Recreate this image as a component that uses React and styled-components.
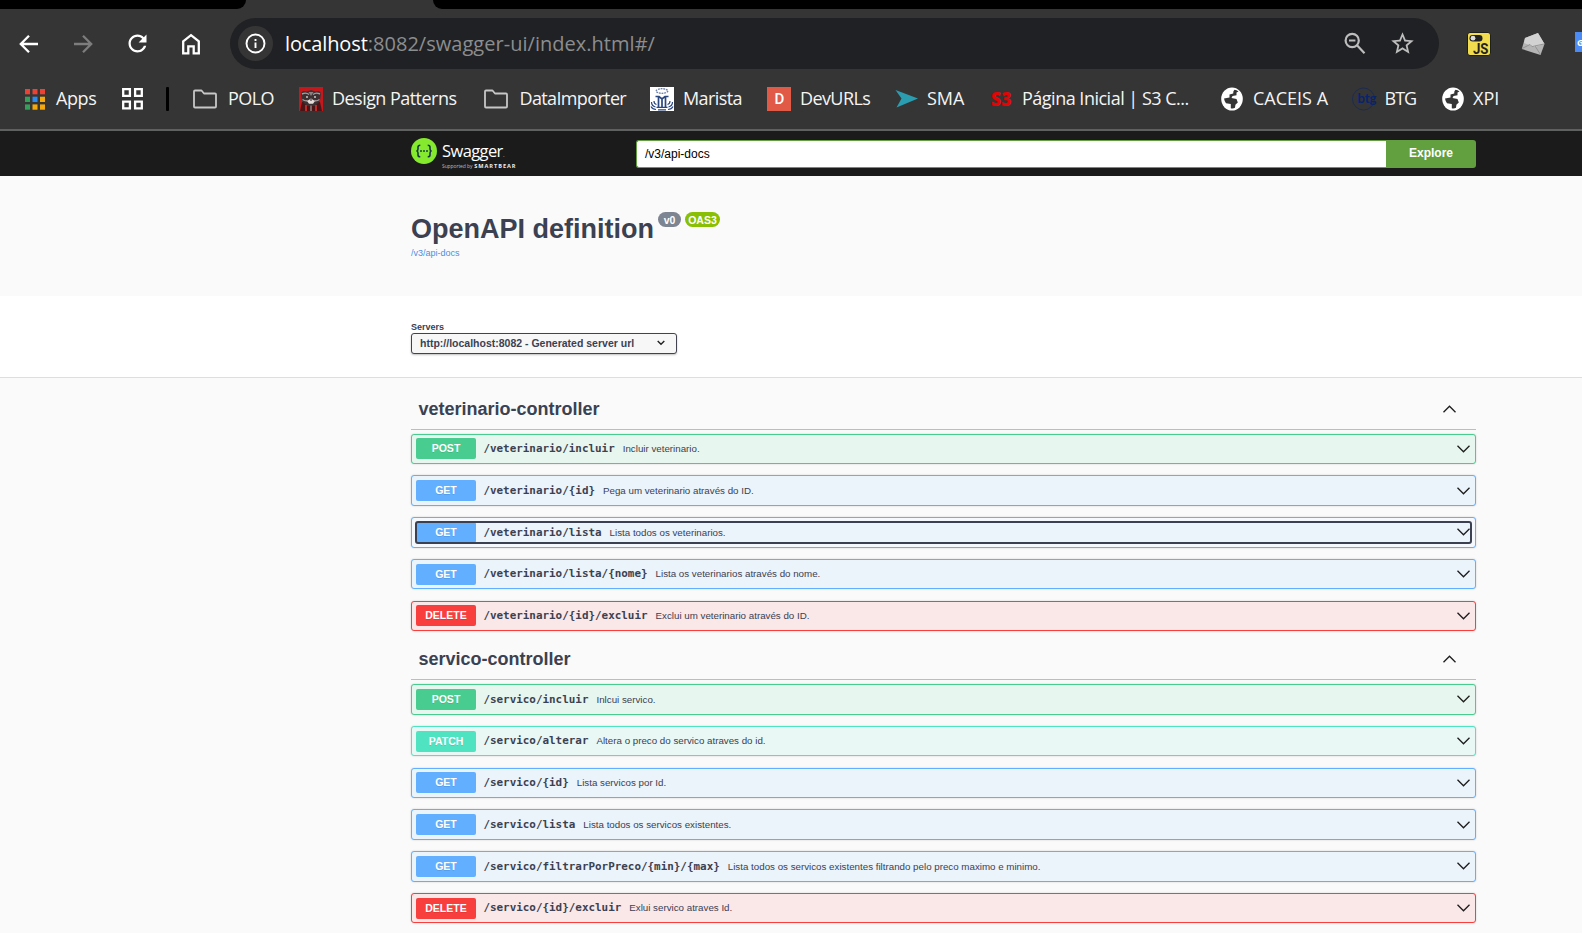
import React from 'react';
import styled, { createGlobalStyle, css } from 'styled-components';

const GlobalStyle = createGlobalStyle`
  * { box-sizing: border-box; }
  html, body { margin: 0; padding: 0; }
  body {
    width: 1582px;
    height: 933px;
    overflow: hidden;
    background: #fafafa;
    color: #3b4151;
    font-family: 'Liberation Sans', Arial, sans-serif;
  }
  svg { display: block; flex: none; }
`;

const uiFont = "'Open Sans', 'Noto Sans', sans-serif";

/* ---------- browser frame ---------- */

const Browser = styled.header`
  background: #353535;
  height: 131px;
  border-bottom: 2px solid #5f6060;
`;

const TabStrip = styled.div`
  display: flex;
  justify-content: space-between;
  height: 9px;
  background: #353535;
`;

const TabGap = styled.div`
  background: #000;
  width: ${(p) => p.$width}px;
  border-radius: ${(p) => (p.$side === 'left' ? '0 0 12px 0' : '0 0 0 12px')};
`;

const Toolbar = styled.div`
  display: flex;
  align-items: center;
  height: 69px;
  padding-left: 17px;
`;

const NavButton = styled.span`
  display: flex;
  align-items: center;
  justify-content: center;
  width: 24px;
  height: 24px;
  margin-right: ${(p) => p.$gap}px;
  color: ${(p) => (p.$dim ? '#7d7d7d' : '#fff')};
`;

const AddressBar = styled.div`
  display: flex;
  align-items: center;
  width: 1209px;
  height: 51px;
  padding: 0 23px 0 8px;
  border-radius: 26px;
  background: #202124;
`;

const InfoBadge = styled.span`
  display: flex;
  align-items: center;
  justify-content: center;
  width: 35px;
  height: 35px;
  margin-right: 12px;
  border-radius: 50%;
  background: #353535;
`;

const Url = styled.span`
  flex: 1;
  font: 20px/28px ${uiFont};
  letter-spacing: 0.03px;
  color: #8c8d8f;
  white-space: nowrap;
`;

const Host = styled.span`
  color: #fff;
  letter-spacing: -0.12px;
`;

const AddressIcons = styled.span`
  display: flex;
  align-items: center;
  gap: 22px;
  color: #bdbdbd;
`;

const Extensions = styled.div`
  display: flex;
  align-items: center;
  gap: 30px;
  margin-left: 28px;
  overflow: hidden;
  flex: 1;
`;

const Bookmarks = styled.nav`
  display: flex;
  align-items: center;
  height: 42px;
  padding: 0 0 0 25px;
`;

const Bookmark = styled.span`
  display: flex;
  align-items: center;
  flex: none;
  gap: ${(p) => p.$gap}px;
  width: ${(p) => p.$width}px;
`;

const BookmarkLabel = styled.span`
  padding-bottom: 2px;
  font: 18px/24px ${uiFont};
  letter-spacing: ${(p) => p.$track || 0}px;
  color: #f4f4f4;
  white-space: nowrap;
`;

const Divider = styled.span`
  width: 3px;
  height: 24px;
  margin-right: 24px;
  border-radius: 1px;
  background: #000;
`;

/* ---------- swagger page ---------- */

const Wrapper = styled.div`
  display: flex;
  flex-direction: column;
  width: 1065px;
  margin-left: 411px;
`;

const TopBar = styled.div`
  height: 45px;
  background: #1b1b1b;
`;

const TopBarRow = styled(Wrapper)`
  flex-direction: row;
  align-items: center;
  height: 45px;
`;

const Logo = styled.div`
  display: flex;
  align-items: flex-start;
  gap: 5px;
  width: 225px;
  height: 31px;
`;

const LogoText = styled.div`
  display: flex;
  flex-direction: column;
  color: #fff;
  font-family: 'Open Sans', sans-serif;
  white-space: nowrap;
`;

const LogoName = styled.span`
  height: 22px;
  font-size: 16.5px;
  line-height: 26px;
  letter-spacing: -0.6px;
`;

const LogoDot = styled.span`
  font-size: 8px;
  color: #888;
`;

const LogoTagline = styled.span`
  display: flex;
  gap: 2px;
  height: 8px;
  font-size: 5px;
  line-height: 12px;
  letter-spacing: -0.1px;
  color: #bbb;
`;

const LogoBrand = styled.b`
  font-size: 5.6px;
  letter-spacing: 0.95px;
  color: #eee;
`;

const ApiInput = styled.div`
  flex: 1;
  height: 28px;
  padding: 0 8px;
  border: 1px solid #62a03f;
  border-right: 0;
  border-radius: 3px 0 0 3px;
  background: #fff;
  color: #000;
  font-size: 12px;
  line-height: 26px;
`;

const ExploreButton = styled.div`
  width: 90px;
  height: 28px;
  border-radius: 0 3px 3px 0;
  background: #62a03f;
  color: #fff;
  font-size: 12px;
  font-weight: 700;
  line-height: 27px;
  text-align: center;
`;

const Info = styled.section`
  height: 120px;
  padding-top: 35px;
`;

const TitleRow = styled.div`
  display: flex;
  gap: 4px;
  height: 36px;
`;

const Title = styled.h1`
  margin: 0;
  width: 243px;
  font-size: 27px;
  line-height: 37px;
  white-space: nowrap;
`;

const Version = styled.span`
  height: 15px;
  width: ${(p) => p.$width}px;
  margin-top: 1px;
  border-radius: 8px;
  background: ${(p) => p.$color};
  color: #fff;
  font-size: 10.5px;
  font-weight: 700;
  line-height: 16px;
  text-align: center;
`;

const SpecLink = styled.a`
  color: #4990e2;
  font-size: 9px;
  line-height: 12px;
`;

const Servers = styled.section`
  height: 82px;
  padding-top: 25px;
  background: #fff;
  border-bottom: 1px solid #dedede;
`;

const ServersLabel = styled.span`
  font-size: 9px;
  font-weight: 700;
  line-height: 12px;
`;

const ServerSelect = styled.div`
  display: flex;
  align-items: center;
  justify-content: space-between;
  width: 266px;
  height: 21px;
  padding: 0 11px 1px 8px;
  border: 1px solid #41444e;
  border-radius: 3px;
  background: #f7f7f7;
  box-shadow: 0 1px 2px rgba(0, 0, 0, 0.25);
  font-size: 10.5px;
  font-weight: 700;
  line-height: 18px;
  white-space: nowrap;
`;

const Tag = styled.h2`
  display: flex;
  align-items: center;
  justify-content: space-between;
  height: ${(p) => p.$height}px;
  margin: 0 0 ${(p) => p.$gap}px;
  padding: ${(p) => p.$height - 41}px 20px 0 7.5px;
  border-bottom: 1px solid #bcbdc0;
  font-size: 18px;
  line-height: 24px;
`;

const Operations = styled.div`
  display: flex;
  flex-direction: column;
  gap: 11.25px;
`;

const tones = {
  POST: ['#49cc90', '#e8f6f0'],
  GET: ['#61affe', '#ebf3fb'],
  PATCH: ['#50e3c2', '#e9f8f5'],
  DELETE: ['#f93e3e', '#fae7e7'],
};

const Operation = styled.div`
  height: 30.5px;
  padding: 3px;
  border: 1px solid ${(p) => tones[p.$method][0]};
  border-radius: 3px;
  background: ${(p) => tones[p.$method][1]};
  box-shadow: 0 0 2px rgba(0, 0, 0, 0.19);
  ${(p) => p.$focused && css`background: #f5f9fd;`}
`;

const Summary = styled.div`
  display: flex;
  align-items: center;
  height: 22.5px;
  padding-right: 2px;
  ${(p) =>
    p.$focused &&
    css`
      background: ${tones.GET[1]};
      outline: 2px solid #3b4151;
      outline-offset: -2px;
      border-radius: 3px;
    `}
`;

const Method = styled.span`
  width: 60px;
  height: 21px;
  margin-left: 1px;
  border-radius: 2px;
  background: ${(p) => tones[p.$method][0]};
  color: #fff;
  font-size: 10.5px;
  font-weight: 700;
  line-height: 21px;
  text-align: center;
  text-shadow: 0 1px 0 rgba(0, 0, 0, 0.1);
`;

const Path = styled.span`
  margin: 0 8px 0 7.4px;
  padding-top: 0.6px;
  font: 700 10.92px/20px 'DejaVu Sans Mono', monospace;
  white-space: nowrap;
`;

const Description = styled.span`
  flex: 1;
  padding-top: 0.6px;
  font-size: 9.75px;
  line-height: 20px;
  white-space: nowrap;
`;

/* ---------- icons ---------- */

const Stroke = ({ size = 24, w = 2, children }) => (
  <svg width={size} height={size} viewBox="0 0 24 24" fill="none" stroke="currentColor" strokeWidth={w}>
    {children}
  </svg>
);

const BackIcon = () => <Stroke w={2.3}><path d="M21 12H4.5M12 3.8L3.8 12l8.2 8.2" /></Stroke>;
const ForwardIcon = () => <Stroke w={2.3}><path d="M3 12h16.5M12 3.8l8.2 8.2-8.2 8.2" /></Stroke>;
const ReloadIcon = () => (
  <svg width="27" height="27" viewBox="0 0 24 24" fill="currentColor">
    <path d="M17.65 6.35C16.2 4.9 14.21 4 12 4c-4.42 0-7.99 3.58-7.99 8s3.57 8 7.99 8c3.73 0 6.84-2.55 7.73-6h-2.08c-.82 2.33-3.04 4-5.65 4-3.31 0-6-2.69-6-6s2.69-6 6-6c1.66 0 3.14.69 4.22 1.78L13 11h7V4l-2.35 2.35z" />
  </svg>
);
const HomeIcon = () => (
  <Stroke w={2.3}><path d="M4.2 9.3L12 3.2l7.8 6.1v12h-5.1v-7H9.3v7H4.2z" /></Stroke>
);
const InfoIcon = () => (
  <svg width="21" height="21" viewBox="0 0 21 21" fill="none" stroke="#fff" strokeWidth="1.9">
    <circle cx="10.5" cy="10.5" r="9" />
    <path d="M10.5 9.5v5.5M10.5 6v2" />
  </svg>
);
const ZoomOutIcon = () => (
  <svg width="23" height="23" viewBox="0 0 23 23" fill="none" stroke="currentColor" strokeWidth="2.2">
    <circle cx="8.2" cy="8.5" r="6.6" />
    <path d="M13 13.300l7.500 8M5 8.500h6.400" />
  </svg>
);
const StarIcon = () => (
  <svg width="27" height="27" viewBox="0 0 24 24" fill="currentColor">
    <path d="M22 9.24l-7.19-.62L12 2 9.19 8.63 2 9.24l5.46 4.73L5.82 21 12 17.27 18.18 21l-1.63-7.03L22 9.24zM12 15.4l-3.76 2.27 1-4.28-3.32-2.88 4.38-.38L12 6.1l1.71 4.04 4.38.38-3.32 2.88 1 4.28L12 15.4z" />
  </svg>
);
const JsIcon = () => (
  <svg width="24" height="24" viewBox="0 0 24 24">
    <rect x="0.5" y="0.5" width="23" height="23" rx="2.5" fill="#f0dc4e" stroke="#1f1f1b" />
    <rect x="2.5" y="3" width="13" height="6.5" rx="3.2" fill="#222" />
    <circle cx="6" cy="6.200" r="2.400" fill="#ddd" />
    <text x="6" y="21.500" textLength="15.500" lengthAdjust="spacingAndGlyphs" fontFamily="Roboto" fontSize="15" fontWeight="700" fill="#222">JS</text>
  </svg>
);
const EnvelopeIcon = () => (
  <svg width="24" height="24" viewBox="0 0 24 24">
    <path d="M4 6l13-5 6.500 11-4 11L.8 17z" fill="#b4b4b4" />
    <path d="M4 6l13-5 6.500 11-10 3L3 11z" fill="#d2d2d2" />
    <path d="M1 16.500L9 12.500q2 3.500 4.500 1.500l9.500-2M19.500 22.500L14 14" fill="none" stroke="#8f8f8f" strokeWidth=".9" />
  </svg>
);
const TranslateIcon = () => (
  <svg width="24" height="24" viewBox="0 0 24 24">
    <rect x="-1" y="0" width="20" height="20" rx="1.5" fill="#4c8bf5" />
    <text x="2" y="13.500" fontFamily="Open Sans" fontSize="9" fontWeight="700" fill="#fff">G</text>
  </svg>
);

const appColors = ['#ea4335', '#ea4335', '#ea4335', '#34a15a', '#2a8bf2', '#f5a80c', '#34a15a', '#f5a80c', '#f5a80c'];
const AppsIcon = () => (
  <svg width="20" height="21" viewBox="0 0 20 21">
    {appColors.map((c, i) => (
      <rect key={i} x={(i % 3) * 7.5} y={Math.floor(i / 3) * 7.7} width="5" height="5.3" fill={c} />
    ))}
  </svg>
);
const GridIcon = () => (
  <svg width="21" height="22" viewBox="0 0 21 22" fill="none" stroke="#fff" strokeWidth="2.3">
    <path d="M1.200 1.200h6.700v6.700H1.200zM13.100 1.200h6.700v6.700h-6.700zM1.200 13.700h6.700v6.700H1.200zM13.100 13.700h6.700v6.700h-6.700z" />
  </svg>
);
const FolderIcon = () => (
  <svg width="24" height="20" viewBox="0 0 24 20" fill="none" stroke="#c7c7c7" strokeWidth="1.8" strokeLinejoin="round">
    <path d="M1 2.500Q1 1.500 2 1.500h6.500l2.500 3h11q1 0 1 1v12q0 1-1 1H2q-1 0-1-1z" />
  </svg>
);
const RaccoonIcon = () => (
  <svg width="24" height="24" viewBox="0 0 24 24">
    <path d="M0 0h24v24H0z" fill="#c5181c" />
    <path d="M3 15L1 24h22l-2-9z" fill="#4b1517" />
    <path d="M2 6l2-2 4 .5L12 3l4 1.500 4-.5 2 2-1 8-5 5H8l-5-5z" fill="#3c3033" />
    <path d="M3 7q4-2 7 .5M21 7q-4-2-7 .5M3.500 12.500q3 2 5 1M20.500 12.500q-3 2-5 1" fill="none" stroke="#a89b9c" strokeWidth="1.400" />
    <path d="M9.500 5h5L12 9z" fill="#8d7f80" />
    <path d="M8 14l4-2.500 4 2.500-2 2.800h-4z" fill="#e6dedd" />
    <circle cx="8" cy="10" r=".9" fill="#ddd" />
    <circle cx="16" cy="10" r=".9" fill="#ddd" />
    <path d="M10.700 12.500h2.600L12 14z" fill="#1b1214" />
    <path d="M7 18v6M17 18v6" stroke="#b92a28" strokeWidth="2" />
    <path d="M11 18.500h2V24h-2z" fill="#7a6667" />
  </svg>
);
const MaristaIcon = () => (
  <svg width="24" height="24" viewBox="0 0 24 24">
    <path d="M0 0h24v24H0z" fill="#fff" />
    <ellipse cx="12" cy="4" rx="5.8" ry="2.3" fill="none" stroke="#6c80a8" strokeWidth="1.3" strokeDasharray="1.8 .8" />
    <g fill="none" stroke="#2b4780">
      <path d="M5.500 9.500H9l3 2.500 3-2.500h3.500M8.500 9.500V20M15.500 9.500V20M12 12v8" strokeWidth="1.700" />
      <path d="M6.500 20.300h11M8 22.800h8" strokeWidth="1.200" />
      <path d="M1.500 15q0 4 4 5M22.500 15q0 4-4 5M4 14q0 3 2.500 3.500M20 14q0 3-2.500 3.500M1 19.500q1.500 3 5 3M23 19.500q-1.500 3-5 3" strokeWidth="1.200" />
    </g>
  </svg>
);
const DevIcon = () => (
  <svg width="24" height="24" viewBox="0 0 24 24">
    <path d="M0 0h24v24H0z" fill="#e05a47" />
    <text x="12.300" y="17.300" textAnchor="middle" fontFamily="Roboto" fontSize="15" fontWeight="500" fill="#fff">D</text>
  </svg>
);
const SmaIcon = () => (
  <svg width="24" height="20" viewBox="0 0 24 20">
    <path d="M.5 1L23 9.500 1.500 18.500l5-9z" fill="#2b9db0" />
  </svg>
);
const S3Icon = () => (
  <svg width="22" height="24" viewBox="0 0 22 24">
    <text x="0" y="19" textLength="20.500" lengthAdjust="spacingAndGlyphs" fontFamily="Open Sans" fontSize="19" fontWeight="800" fill="#e30505">S3</text>
  </svg>
);
const GlobeIcon = () => (
  <svg width="22" height="26" viewBox="0 0 22 26">
    <ellipse cx="11" cy="13" rx="10.8" ry="11.5" fill="#fff" />
    <path d="M13.500 3.800Q12 5 12.200 7.500L8.500 8.500v3L3 12.500q.5 3 2 4.800l4.800.6v4.400q2.500.5 4.200-.5l.4-3 2.400-2.300-1.300-3.400-5-1.200 1-2 4-.7V6.500l2-1q-1.800-1.400-4-1.700z" fill="#353535" />
  </svg>
);
const BtgIcon = () => (
  <svg width="25" height="26" viewBox="0 0 25 26">
    <circle cx="11.5" cy="13" r="11" fill="none" stroke="#1d2b4e" />
    <text x="5.500" y="17" textLength="19" lengthAdjust="spacingAndGlyphs" fontFamily="Lato" fontSize="12.500" fontWeight="700" fill="#07246b">btg</text>
  </svg>
);

const SwaggerMark = () => (
  <svg width="26" height="26" viewBox="0 0 26 26">
    <circle cx="13" cy="13" r="13" fill="#85ea2d" />
    <g fill="none" stroke="#173647" strokeWidth="1.6">
      <path d="M9.300 7.200q-2.300 0-2.300 1.800v2q0 1.900-1.600 2 1.600.1 1.600 2v2q0 1.800 2.300 1.800M16.700 7.200q2.300 0 2.300 1.800v2q0 1.900 1.600 2-1.600.1-1.600 2v2q0 1.800-2.300 1.800" />
    </g>
    <g fill="#173647">
      <circle cx="10" cy="13" r=".95" /><circle cx="13" cy="13" r=".95" /><circle cx="16" cy="13" r=".95" />
    </g>
  </svg>
);

const Chevron = ({ up }) => (
  <svg width="13" height="8" viewBox="0 0 13 8" fill="none" stroke="#1c1c1c" strokeWidth="1.3">
    <path d={up ? 'M.5 7.200l6-6 6 6' : 'M.5 .8l6 6 6-6'} />
  </svg>
);

const SelectArrow = () => (
  <svg width="8" height="6" viewBox="0 0 8 6" fill="none" stroke="#222" strokeWidth="1.4">
    <path d="M.7 1l3.300 3.300L7.300 1" />
  </svg>
);

/* ---------- data ---------- */

const bookmarks = [
  { icon: <FolderIcon />, label: 'POLO', width: 106, gap: 11, track: -0.6 },
  { icon: <RaccoonIcon />, label: 'Design Patterns', width: 185, gap: 9, track: -0.54 },
  { icon: <FolderIcon />, label: 'DataImporter', width: 166, gap: 11.5, track: -0.64 },
  { icon: <MaristaIcon />, label: 'Marista', width: 117, gap: 9, track: -0.6 },
  { icon: <DevIcon />, label: 'DevURLs', width: 128, gap: 9, track: -0.6 },
  { icon: <SmaIcon />, label: 'SMA', width: 96, gap: 8 },
  { icon: <S3Icon />, label: 'Página Inicial | S3 C...', width: 230, gap: 9, track: -0.5 },
  { icon: <GlobeIcon />, label: 'CACEIS A', width: 131, gap: 10 },
  { icon: <BtgIcon />, label: 'BTG', width: 90, gap: 7.5, track: -1 },
  { icon: <GlobeIcon />, label: 'XPI', width: 60, gap: 9 },
];

const controllers = [
  {
    name: 'veterinario-controller',
    height: 52,
    gap: 3.5,
    operations: [
      ['POST', '/veterinario/incluir', 'Incluir veterinario.'],
      ['GET', '/veterinario/{id}', 'Pega um veterinario através do ID.'],
      ['GET', '/veterinario/lista', 'Lista todos os veterinarios.', true],
      ['GET', '/veterinario/lista/{nome}', 'Lista os veterinarios através do nome.'],
      ['DELETE', '/veterinario/{id}/excluir', 'Exclui um veterinario através do ID.'],
    ],
  },
  {
    name: 'servico-controller',
    height: 49,
    gap: 4,
    operations: [
      ['POST', '/servico/incluir', 'Inlcui servico.'],
      ['PATCH', '/servico/alterar', 'Altera o preco do servico atraves do id.'],
      ['GET', '/servico/{id}', 'Lista servicos por Id.'],
      ['GET', '/servico/lista', 'Lista todos os servicos existentes.'],
      ['GET', '/servico/filtrarPorPreco/{min}/{max}', 'Lista todos os servicos existentes filtrando pelo preco maximo e minimo.'],
      ['DELETE', '/servico/{id}/excluir', 'Exlui servico atraves Id.'],
    ],
  },
];

export default function App() {
  return (
    <>
      <GlobalStyle />
      <Browser>
        <TabStrip>
          <TabGap $side="left" $width={246} />
          <TabGap $side="right" $width={1149} />
        </TabStrip>
        <Toolbar>
          <NavButton $gap={30}><BackIcon /></NavButton>
          <NavButton $gap={30} $dim><ForwardIcon /></NavButton>
          <NavButton $gap={30}><ReloadIcon /></NavButton>
          <NavButton $gap={27}><HomeIcon /></NavButton>
          <AddressBar>
            <InfoBadge><InfoIcon /></InfoBadge>
            <Url><Host>localhost</Host>:8082/swagger-ui/index.html#/</Url>
            <AddressIcons><ZoomOutIcon /><StarIcon /></AddressIcons>
          </AddressBar>
          <Extensions><JsIcon /><EnvelopeIcon /><TranslateIcon /></Extensions>
        </Toolbar>
        <Bookmarks>
          <Bookmark $gap={11} $width={97}><AppsIcon /><BookmarkLabel $track={-0.4}>Apps</BookmarkLabel></Bookmark>
          <Bookmark $gap={0} $width={44}><GridIcon /></Bookmark>
          <Divider />
          {bookmarks.map((b) => (
            <Bookmark key={b.label} $gap={b.gap} $width={b.width}>
              {b.icon}
              <BookmarkLabel $track={b.track}>{b.label}</BookmarkLabel>
            </Bookmark>
          ))}
        </Bookmarks>
      </Browser>

      <TopBar>
        <TopBarRow>
          <Logo>
            <SwaggerMark />
            <LogoText>
              <LogoName>Swagger<LogoDot>.</LogoDot></LogoName>
              <LogoTagline>Supported by <LogoBrand>SMARTBEAR</LogoBrand></LogoTagline>
            </LogoText>
          </Logo>
          <ApiInput>/v3/api-docs</ApiInput>
          <ExploreButton>Explore</ExploreButton>
        </TopBarRow>
      </TopBar>

      <Info>
        <Wrapper>
          <TitleRow>
            <Title>OpenAPI definition</Title>
            <Version $width={23} $color="#7d8492">v0</Version>
            <Version $width={35} $color="#89bf04">OAS3</Version>
          </TitleRow>
          <SpecLink>/v3/api-docs</SpecLink>
        </Wrapper>
      </Info>

      <Servers>
        <Wrapper>
          <ServersLabel>Servers</ServersLabel>
          <ServerSelect>http://localhost:8082 - Generated server url<SelectArrow /></ServerSelect>
        </Wrapper>
      </Servers>

      <Wrapper as="main">
        {controllers.map((c) => (
          <section key={c.name}>
            <Tag $height={c.height} $gap={c.gap}>{c.name}<Chevron up /></Tag>
            <Operations>
              {c.operations.map(([method, path, text, focused]) => (
                <Operation key={path} $method={method} $focused={focused}>
                  <Summary $focused={focused}>
                    <Method $method={method}>{method}</Method>
                    <Path>{path}</Path>
                    <Description>{text}</Description>
                    <Chevron />
                  </Summary>
                </Operation>
              ))}
            </Operations>
          </section>
        ))}
      </Wrapper>
    </>
  );
}
